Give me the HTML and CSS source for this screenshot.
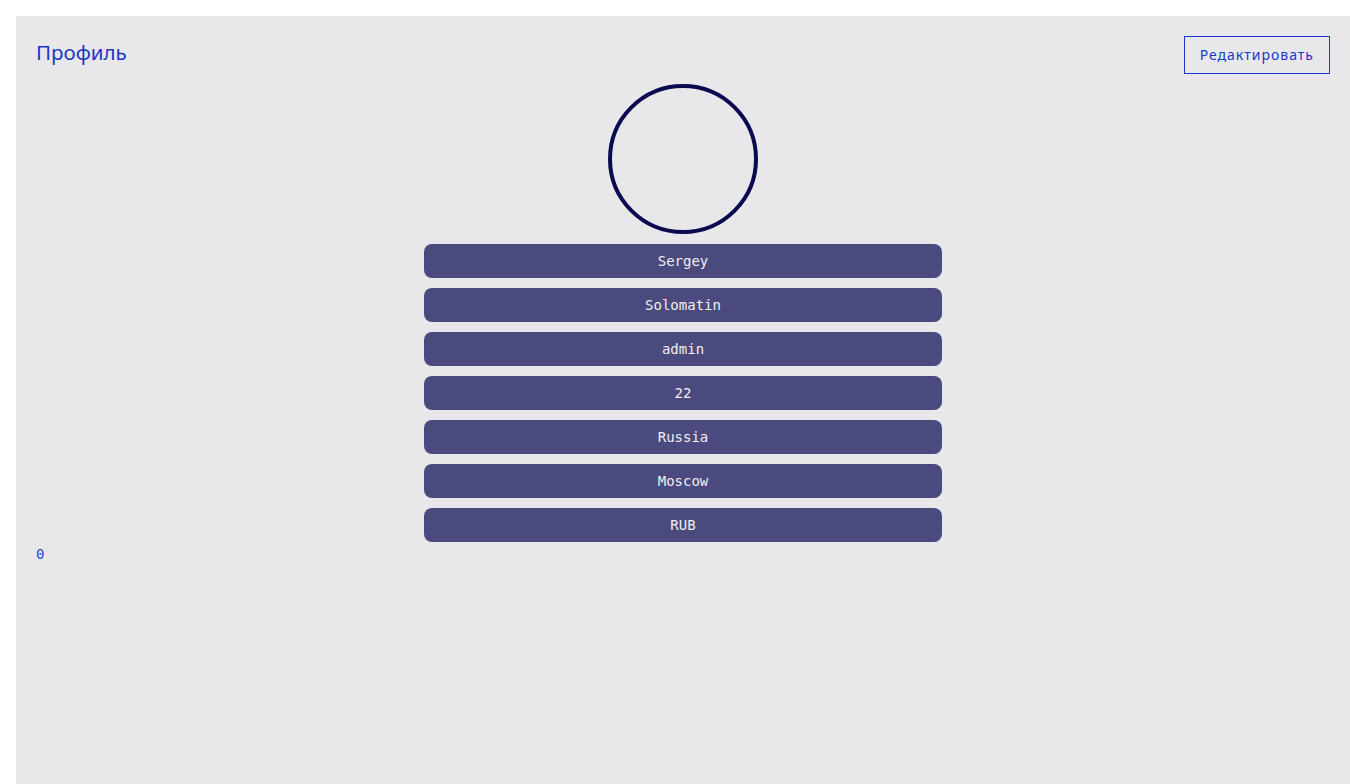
FILE: index.html
```html
<!DOCTYPE html>
<html lang="ru">
<head>
<meta charset="utf-8">
<title>Профиль</title>
<link rel="stylesheet" href="styles.css">
</head>
<body>
<main class="panel">
  <header class="head">
    <h1 class="title">Профиль</h1>
    <button class="edit">Редактировать</button>
  </header>
  <div class="avatar"></div>
  <ul class="fields">
    <li class="field">Sergey</li>
    <li class="field">Solomatin</li>
    <li class="field">admin</li>
    <li class="field">22</li>
    <li class="field">Russia</li>
    <li class="field">Moscow</li>
    <li class="field">RUB</li>
  </ul>
  <div class="count">0</div>
</main>
</body>
</html>
```
FILE: styles.css
```css
html, body {
  margin: 0;
  height: 100%;
}
body {
  padding: 16px 0 0 16px;
  box-sizing: border-box;
  background: #ffffff;
  overflow: hidden;
}
.panel {
  background: #e8e8ea;
  min-height: 100%;
  box-sizing: border-box;
  padding: 20px 20px;
  display: flex;
  flex-direction: column;
}
.head {
  display: flex;
  justify-content: space-between;
  align-items: flex-start;
  height: 38px;
}
.title {
  margin: 0;
  font-family: "Noto Sans", "Open Sans", sans-serif;
  font-weight: 400;
  font-size: 20.5px;
  line-height: 32px;
  color: #1a38c8;
}
.edit {
  height: 38px;
  padding: 0 15px;
  background: transparent;
  border: 1px solid #1a38c8;
  border-radius: 0;
  color: #1a38c8;
  font-family: "Noto Sans", "Open Sans", sans-serif;
  font-size: 14px;
  letter-spacing: 1px;
  line-height: 36px;
}
.avatar {
  align-self: center;
  width: 150px;
  height: 150px;
  box-sizing: border-box;
  border: 4px solid #0b0a50;
  border-radius: 50%;
  margin-top: 10px;
}
.fields {
  list-style: none;
  margin: 10px 0 0;
  padding: 0;
  align-self: center;
  width: 518px;
  display: flex;
  flex-direction: column;
  gap: 10px;
}
.field {
  height: 34px;
  border-radius: 8px;
  background: #4a4a7e;
  color: #f2eef2;
  font-family: "DejaVu Sans Mono", "Liberation Mono", monospace;
  font-size: 14px;
  display: flex;
  align-items: center;
  justify-content: center;
}
.count {
  margin-top: 2px;
  font-family: "DejaVu Sans Mono", "Liberation Mono", monospace;
  font-size: 14px;
  line-height: 20px;
  color: #1a48d0;
}
```
